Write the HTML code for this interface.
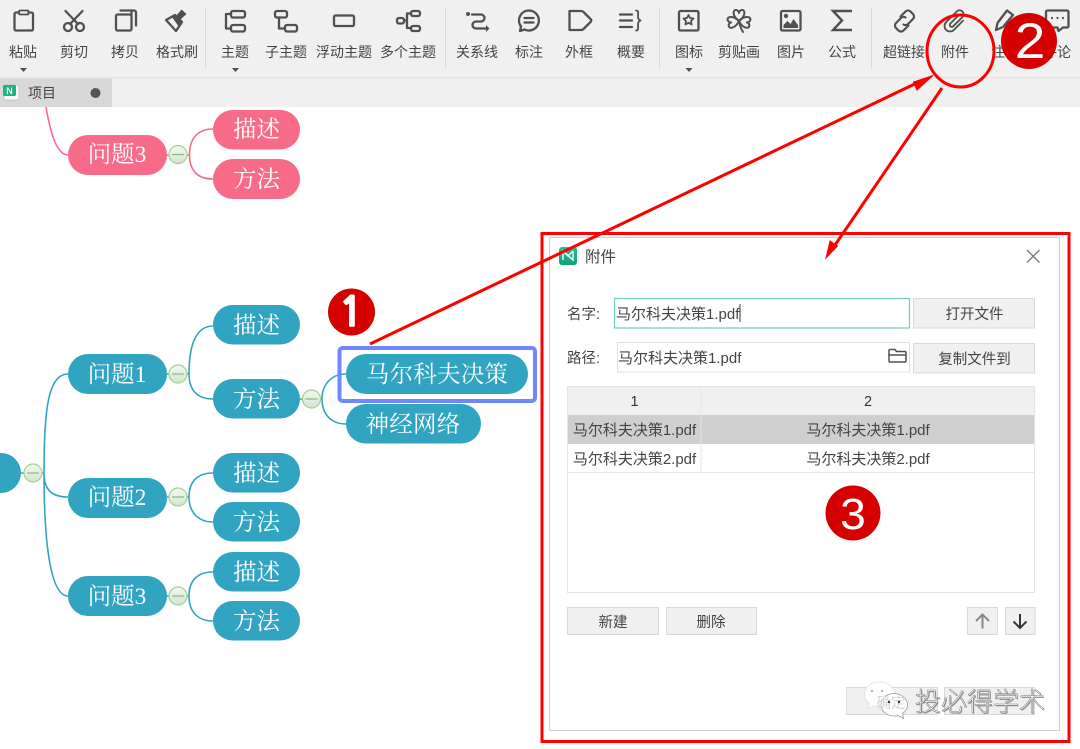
<!DOCTYPE html>
<html lang="zh">
<head>
<meta charset="utf-8">
<title>附件</title>
<style>
html,body{margin:0;padding:0;background:#fff;width:1080px;height:749px;overflow:hidden}
svg{display:block;filter:blur(.35px)}
.tb{font:14px "Liberation Sans","Noto Sans CJK SC",sans-serif;fill:#444;text-anchor:middle}
.ic{fill:none;stroke:#505050;stroke-width:2.3;stroke-linejoin:round;stroke-linecap:round}
.n{font:23.5px "Liberation Serif","Noto Serif CJK SC",serif;fill:#fff;text-anchor:middle}
.d{font:14.5px "Liberation Sans","Noto Sans CJK SC",sans-serif;fill:#444}
.f{font-size:15px}
.m{text-anchor:middle}
.btn{fill:#f0f0f0;stroke:#d9d9d9;stroke-width:1}
.c{fill:none;stroke:#31a4c2;stroke-width:1.6}
.p{fill:none;stroke:#f76b89;stroke-width:1.6}
</style>
</head>
<body>
<svg width="1080" height="749" viewBox="0 0 1080 749" xmlns="http://www.w3.org/2000/svg">
<defs>
<linearGradient id="tg" x1="0" y1="0" x2="0" y2="1"><stop offset="0" stop-color="#f4f8f2"/><stop offset="1" stop-color="#d3e3d3"/></linearGradient>
<linearGradient id="lg" x1="0" y1="0" x2="0" y2="1"><stop offset="0" stop-color="#27bd8f"/><stop offset="1" stop-color="#0fa37a"/></linearGradient>
<g id="t"><circle r="9" fill="url(#tg)" stroke="#a3d08a" stroke-width="1.2"/><path d="M-6 0H6" stroke="#86bf6e" stroke-width="1.2"/></g>
</defs>

<!-- toolbar -->
<rect width="1080" height="107" fill="#f0f0f0"/>
<rect y="77" width="1080" height="1.5" fill="#e4e4e4"/>
<rect y="78.5" width="112" height="28.5" fill="#d8d8d8"/>
<g fill="#d9d9d9"><rect x="205" y="8" width="1" height="61"/><rect x="445" y="8" width="1" height="61"/><rect x="659" y="8" width="1" height="61"/><rect x="871" y="8" width="1" height="61"/></g>

<g class="ic">
<path d="M19 12.500h-3a1.500 1.500 0 0 0-1.500 1.500v15a1.500 1.500 0 0 0 1.500 1.500h15.500a1.500 1.500 0 0 0 1.500-1.500v-15a1.500 1.500 0 0 0-1.500-1.500h-3"/><rect x="19" y="10.500" width="9.500" height="4" rx="1" stroke-width="1.800"/>
<circle cx="68" cy="27" r="4"/><circle cx="80" cy="27" r="4"/><path d="M65.500 11L78 24M82.500 11L70 24"/>
<rect x="116" y="14.500" width="15.500" height="16" rx="1.500"/><path d="M120.500 10.500h13.500a2 2 0 0 1 2 2v13"/><path d="M131.500 14.500V12"/>
<path d="M166 20L175 15L182 22L176 31Z"/>

<rect x="231" y="11" width="14" height="6.500" rx="2"/><rect x="231" y="25" width="14" height="6.500" rx="2"/><path d="M231 14h-5v14.500h5"/>
<rect x="275" y="11" width="12" height="6.500" rx="2"/><rect x="285" y="25" width="12" height="6.500" rx="2"/><path d="M279 17.500v11h6"/>
<rect x="334" y="15.500" width="20" height="10.500" rx="1.500"/>
<rect x="397" y="18" width="7" height="5.500" rx="2"/><rect x="411" y="11" width="9" height="5" rx="2"/><rect x="411" y="26" width="9" height="5" rx="2"/><path d="M404 20.500h3M411 13.500h-4v14.500h4"/>

<path d="M472 14.500h9a3.500 3.500 0 0 1 0 7h-5a3.500 3.500 0 0 0 0 7h10"/>
<path d="M529 10.500a10 10 0 1 1-4.500 19l-4.500 1.500 1-4.500a10 10 0 0 1 8-16z"/><path d="M524.500 18h9M524.500 22.500h9"/>
<path d="M569.500 11H581q1.500 0 2.500 1l7 7q1.500 1.500 0 3l-7 7q-1 1-2.500 1h-11.500z"/>
<path d="M620 14.500h12M620 20.500h12M620 27h12"/><path d="M636 10.500c3 0 2 3 2 5s0 4 2.500 5c-2.500 1-2.500 3-2.500 5s1 5-2 5" stroke-width="1.800"/>

<rect x="679" y="11" width="19.500" height="19.500" rx="1.500"/><path d="M688.500 15l1.500 3 3.500.5-2.500 2.500.6 3.500-3.100-1.700-3.100 1.700.6-3.500-2.500-2.500 3.500-.5z" stroke-width="1.800"/>
<path d="M739 21C733 17 732 10 736 10C738 10 739 12 739 13C739 12 740 10 742 10C746 10 745 17 739 21Z" stroke-width="2"/>
<path d="M739 21C733 17 732 10 736 10C738 10 739 12 739 13C739 12 740 10 742 10C746 10 745 17 739 21Z" transform="rotate(-100 739 21)" stroke-width="2"/>
<path d="M739 21C733 17 732 10 736 10C738 10 739 12 739 13C739 12 740 10 742 10C746 10 745 17 739 21Z" transform="rotate(100 739 21)" stroke-width="2"/>
<path d="M739 21Q740 27 743 32" stroke-width="2"/>
<rect x="781" y="11" width="19.500" height="19.500" rx="1.500"/>
<path d="M852 11h-19l9 9.500-9 9.500h19" stroke-width="2.400" stroke-linejoin="miter" stroke-linecap="butt"/>

<path d="M900.500 16.500l5-5a3.500 3.500 0 0 1 5 0l2.500 2.500a3.500 3.500 0 0 1 0 5l-5 5a3.500 3.500 0 0 1-4.500 .5" stroke-width="2.200"/>
<path d="M908.500 25.500l-5 5a3.500 3.500 0 0 1-5 0l-2.500-2.500a3.500 3.500 0 0 1 0-5l5-5a3.500 3.500 0 0 1 4.500-.5" stroke-width="2.200"/>
<path transform="translate(955 21) rotate(45)" d="M5.500 -6V7a5.500 5.500 0 0 1-11 0V-8a4 4 0 0 1 8 0V5a2 2 0 0 1-4 0V-5" stroke-width="1.800"/>
<path d="M996 30l1.500-7L1007 10.500l6 4.500-10 12z"/>
<path d="M1048 10.500h19a1.500 1.500 0 0 1 1.500 1.500v14a1.500 1.500 0 0 1-1.500 1.500h-4l-4.500 3.500-1-3.500h-10a1.500 1.500 0 0 1-1.500-1.500V12a1.500 1.500 0 0 1 1.500-1.500z"/>
</g>
<g fill="#505050">
<path d="M172 17l3-2 7 7-3 5z"/><path d="M176 16l5.500-6.500 5 4.500-6 5.500z"/>
<circle cx="468" cy="14" r="2"/><path d="M486 25l3.500 3.500-3.500 3.500z"/>
<circle cx="786" cy="16" r="2.200"/><path d="M783.500 28v-3l4-4 3 3 3-5 4.500 6v3z"/>
<circle cx="1052" cy="18" r="1.100"/><circle cx="1057.500" cy="18" r="1.100"/><circle cx="1063" cy="18" r="1.100"/>
<path d="M20 68h7l-3.500 4zM232 68h7l-3.500 4zM685.500 68h7l-3.500 4z"/>
</g>
<g class="tb">
<text x="23" y="57">粘贴</text><text x="74" y="57">剪切</text><text x="125" y="57">拷贝</text><text x="177" y="57">格式刷</text>
<text x="235" y="57">主题</text><text x="286" y="57">子主题</text><text x="344" y="57">浮动主题</text><text x="408" y="57">多个主题</text>
<text x="477" y="57">关系线</text><text x="529" y="57">标注</text><text x="579" y="57">外框</text><text x="631" y="57">概要</text>
<text x="689" y="57">图标</text><text x="739" y="57">剪贴画</text><text x="791" y="57">图片</text><text x="842" y="57">公式</text>
<text x="904" y="57">超链接</text><text x="955" y="57">附件</text><text x="1005" y="57">注释</text><text x="1057" y="57">评论</text>
</g>

<!-- tab -->
<rect x="4" y="85" width="15" height="15" rx="2" fill="#f7f7f7" stroke="#bbb" stroke-width=".7"/>
<rect x="3" y="85" width="13" height="11" rx="1.500" fill="#1bb585"/>
<text x="9.500" y="94" font-family="Liberation Sans" font-size="9" font-weight="bold" fill="#fff" text-anchor="middle">N</text>
<text x="28" y="98" font-family="Liberation Sans,Noto Sans CJK SC,sans-serif" font-size="14" fill="#444">项目</text>
<circle cx="95.500" cy="93" r="5" fill="#555"/>

<!-- pink branch -->
<path class="p" d="M46 107C50 130 56 155 68 155M167 155H170M187 155H189.500C189.500 138 198 129 213 129M189.500 155C189.500 171 198 179 213 179"/>
<g fill="#f76b89"><rect x="68" y="135" width="99" height="40" rx="20"/><rect x="213" y="110" width="87" height="39.500" rx="19.700"/><rect x="213" y="159" width="87" height="40" rx="20"/></g>
<use href="#t" x="178" y="154.500"/>
<g class="n"><text x="117" y="162">问题3</text><text x="256.500" y="137">描述</text><text x="256.500" y="187">方法</text></g>

<!-- teal branches -->
<path class="c" d="M21 473H24M42 473H44M44 473C44 410 48 374 68 374M44 473C44 490 52 497 68 497M44 473C44 540 50 596 68 596"/>
<path class="c" d="M167 374H170M187 374H189C189 345 196 326 213 326M189 374C189 390 197 399 213 399"/>
<path class="c" d="M167 497H170M187 497H189C189 481 198 473 213 473M189 497C189 512 198 522 213 522"/>
<path class="c" d="M167 596H170M187 596H189C189 580 198 572 213 572M189 596C189 612 198 621 213 621"/>
<path class="c" d="M300 399H303M320 399H322C322 385 331 374 346 374M322 399C322 414 331 424 346 424"/>
<g fill="#31a4c2">
<rect x="-30" y="453" width="51" height="40" rx="20"/>
<rect x="68" y="354" width="99" height="40" rx="20"/><rect x="68" y="478" width="99" height="40" rx="20"/><rect x="68" y="576" width="99" height="40" rx="20"/>
<rect x="213" y="305" width="87" height="39.500" rx="19.700"/><rect x="213" y="379" width="87" height="39.500" rx="19.700"/>
<rect x="213" y="453" width="87" height="39.500" rx="19.700"/><rect x="213" y="502" width="87" height="39.500" rx="19.700"/>
<rect x="213" y="552" width="87" height="39.500" rx="19.700"/><rect x="213" y="601" width="87" height="39.500" rx="19.700"/>
<rect x="346" y="354" width="182" height="40" rx="20"/><rect x="346" y="404" width="135" height="39.500" rx="19.700"/>
</g>
<use href="#t" x="33" y="473"/><use href="#t" x="178" y="374"/><use href="#t" x="178" y="497"/><use href="#t" x="178" y="596"/><use href="#t" x="311.500" y="399"/>
<g class="n">
<text x="117" y="382">问题1</text><text x="117" y="505">问题2</text><text x="117" y="604">问题3</text>
<text x="256.500" y="333">描述</text><text x="256.500" y="407">方法</text><text x="256.500" y="481">描述</text><text x="256.500" y="530">方法</text><text x="256.500" y="580">描述</text><text x="256.500" y="629">方法</text>
<text x="437" y="382" letter-spacing=".2">马尔科夫决策</text><text x="413" y="432" letter-spacing=".2">神经网络</text>
</g>
<rect x="339.500" y="348" width="195.500" height="53" rx="3" fill="none" stroke="#6f88ff" stroke-width="4"/>

<!-- dialog -->
<rect x="549.500" y="237.500" width="510" height="493" fill="#fff" stroke="#cfcfcf"/>
<rect x="559" y="247" width="18" height="18" rx="3" fill="url(#lg)"/>
<path d="M563 260v-9l10 9v-9M563 251l5 5 5-5" fill="none" stroke="#fff" stroke-width="1.400"/>
<text class="d" x="585" y="262" style="font-size:15.500px">附件</text>
<path d="M1027 250l12.500 12.500M1039.500 250L1027 262.500" stroke="#777" stroke-width="1.300"/>

<text class="d" x="567" y="319">名字:</text>
<rect x="614.500" y="298.500" width="295" height="29.500" fill="#fff" stroke="#72cfaa" stroke-width="1.200"/>
<text class="d f" x="616" y="319">马尔科夫决策1.pdf</text><rect x="739.500" y="304" width="1" height="18" fill="#333"/>
<rect class="btn" x="913.500" y="298.500" width="121" height="29.500"/><text class="d m" x="974.500" y="319">打开文件</text>

<text class="d" x="567" y="363">路径:</text>
<rect x="617.500" y="342.500" width="292" height="29.500" fill="#fff" stroke="#e0e0e0"/>
<text class="d f" x="618" y="363">马尔科夫决策1.pdf</text>
<path d="M889 361v-10.500a1 1 0 0 1 1-1h5l1.500 2h8.500a1 1 0 0 1 1 1V361a1 1 0 0 1-1 1h-15a1 1 0 0 1-1-1zM889 355h17" fill="none" stroke="#505050" stroke-width="1.500"/>
<rect class="btn" x="913.500" y="343.500" width="121" height="29.500"/><text class="d m" x="974.500" y="364">复制文件到</text>

<rect x="567.500" y="386.500" width="467" height="206" fill="#fff" stroke="#e3e3e3"/>
<rect x="568" y="387" width="466" height="28" fill="#f0f0f0"/>
<rect x="568" y="415" width="466" height="29" fill="#cfcfcf"/>
<rect x="568" y="472" width="466" height="1" fill="#e8e8e8"/>
<rect x="700.500" y="387" width="1" height="86" fill="#e6e6e6"/>
<text class="d m" x="634.500" y="406" style="fill:#333">1</text><text class="d m" x="868" y="406" style="fill:#333">2</text>
<text class="d f m" x="634.500" y="435">马尔科夫决策1.pdf</text><text class="d f m" x="868" y="435">马尔科夫决策1.pdf</text>
<text class="d f m" x="634.500" y="464">马尔科夫决策2.pdf</text><text class="d f m" x="868" y="464">马尔科夫决策2.pdf</text>

<rect class="btn" x="567.500" y="607.500" width="91" height="27"/><text class="d m" x="613" y="627">新建</text>
<rect class="btn" x="666.500" y="607.500" width="90" height="27"/><text class="d m" x="711" y="627">删除</text>
<rect class="btn" x="967.500" y="607.500" width="30" height="27"/><path d="M982.500 628.500V615M976 621l6.500-6.500 6.500 6.500" fill="none" stroke="#888" stroke-width="2"/>
<rect class="btn" x="1005.500" y="607.500" width="29.500" height="27"/><path d="M1020 614v14M1013.500 621.500l6.500 6.500 6.500-6.500" fill="none" stroke="#333" stroke-width="2"/>
<rect class="btn" x="846.500" y="687.500" width="91" height="27"/><rect class="btn" x="944.500" y="687.500" width="90" height="27"/>

<!-- watermark -->
<g stroke-width=".8" fill="#fff">
<path d="M879 682c-9 0-14.500 6-14.500 12.500 0 4 2 7 5 9l-1.500 5 6-3c3 1 6 1 9 0 8-2 12-7 12-11 0-7-7-12.500-16-12.500z" stroke="#e0e0e0"/>
<path d="M894 693.500c-8 0-13 5.500-13 11.500s6 11 13 11c1.500 0 3 0 4-.5l5.500 3-1-5c3-2 5-5 5-8.500 0-6-6-11.500-13.500-11.500z" stroke="#999"/>
</g>
<text class="d m" x="891" y="708" style="fill:#d5d5d5">确定</text>
<g fill="#333"><circle cx="889" cy="702" r="1.200"/><circle cx="899" cy="702" r="1.200"/></g>
<g fill="#bbb"><circle cx="872" cy="691" r="1.300"/><circle cx="882" cy="691" r="1.300"/></g>
<g font-family="Liberation Sans,Noto Sans CJK SC,sans-serif" font-size="26" font-weight="300">
<text x="916" y="712" fill="#555" opacity=".55">投必得学术</text>
<text x="915" y="711" fill="#fff" stroke="#777" stroke-width=".5">投必得学术</text>
</g>

<!-- red annotations -->
<rect x="542" y="233.500" width="527" height="508" fill="none" stroke="#fe0000" stroke-width="3"/>
<ellipse cx="960.500" cy="51" rx="33.500" ry="36" fill="none" stroke="#fe0000" stroke-width="3"/>
<path d="M370 344L922 80.500" stroke="#fe0000" stroke-width="3"/>
<path d="M933 75.500L917 90l-3.500-8z" fill="#fe0000" stroke="#fe0000" stroke-width="1"/>
<path d="M942 88L833 248" stroke="#fe0000" stroke-width="3"/>
<path d="M826 258l4-17 7.500 5z" fill="#fe0000" stroke="#fe0000" stroke-width="1"/>

<circle cx="351.500" cy="312" r="23.500" fill="#d50000"/>
<circle cx="1029" cy="41" r="28" fill="#d50000"/>
<circle cx="853" cy="513" r="27.500" fill="#d50000"/>
<g fill="#fff" text-anchor="middle">
<text x="351" y="326" font-family="NanumGothic,sans-serif" font-weight="bold" font-size="40" stroke="#fff" stroke-width="1.500">1</text>
<text transform="translate(1030 58) scale(1.1 1)" font-family="Liberation Sans,sans-serif" font-size="50">2</text>
<text transform="translate(853 529) scale(1.05 1)" font-family="Liberation Sans,sans-serif" font-size="44">3</text>
</g>
</svg>
</body>
</html>
